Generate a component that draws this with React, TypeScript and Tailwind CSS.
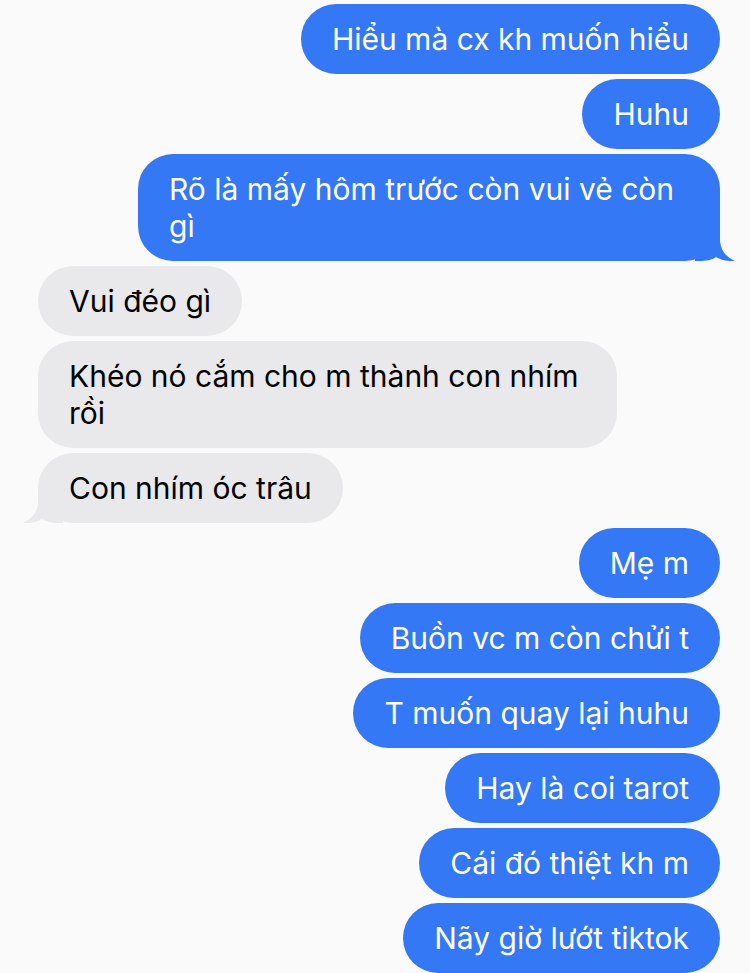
import React from "react";

type Msg = { text: string; me: boolean; tail?: boolean; wide?: string };

const messages: Msg[] = [
    { text: "Hiểu mà cx kh muốn hiểu", me: true },
    { text: "Huhu", me: true },
    { text: "Rõ là mấy hôm trước còn vui vẻ còn gì", me: true, tail: true, wide: "w-[582px]" },
    { text: "Vui đéo gì", me: false },
    { text: "Khéo nó cắm cho m thành con nhím rồi", me: false, wide: "w-[579px]" },
    { text: "Con nhím óc trâu", me: false, tail: true },
    { text: "Mẹ m", me: true },
    { text: "Buồn vc m còn chửi t", me: true },
    { text: "T muốn quay lại huhu", me: true },
    { text: "Hay là coi tarot", me: true },
    { text: "Cái đó thiệt kh m", me: true },
    { text: "Nãy giờ lướt tiktok", me: true },
];

function Tail({ me }: { me: boolean }) {
    // bubble edge sits at x=25 in the box, tip at x=40
    return (
        <svg
            width="40"
            height="34"
            viewBox="0 0 40 34"
            className={
                me
                    ? "absolute bottom-0 right-[-15px]"
                    : "absolute bottom-0 left-[-15px] -scale-x-100"
            }
        >
            <path
                d="M0 34 L0 0 L25 0 L25 12 C25 23 31 30 40 34 C32 34.5 26 33 21 30 C17 33 11 34 4 34 Z"
                fill={me ? "#3478f6" : "#e9e9eb"}
            />
        </svg>
    );
}

export default function App() {
    return (
        <div className="min-h-screen bg-[#fafafa] pt-[4px] font-['Inter','Noto_Sans',sans-serif]">
            <div className="flex flex-col gap-[5px]">
                {messages.map((m, i) => (
                    <div
                        key={i}
                        className={m.me ? "flex justify-end pr-[30px]" : "flex justify-start pl-[38px]"}
                    >
                        <div
                            className={
                                (m.me
                                    ? "relative rounded-[35px] bg-[#3478f6] px-[31px] py-[16.5px] text-[30px] leading-[37px] text-white "
                                    : "relative rounded-[35px] bg-[#e9e9eb] px-[31px] py-[16.5px] text-[30px] leading-[37px] text-black ") +
                                (m.wide ?? "")
                            }
                        >
                            {m.tail && <Tail me={m.me} />}
                            <span className="relative">{m.text}</span>
                        </div>
                    </div>
                ))}
            </div>
        </div>
    );
}
